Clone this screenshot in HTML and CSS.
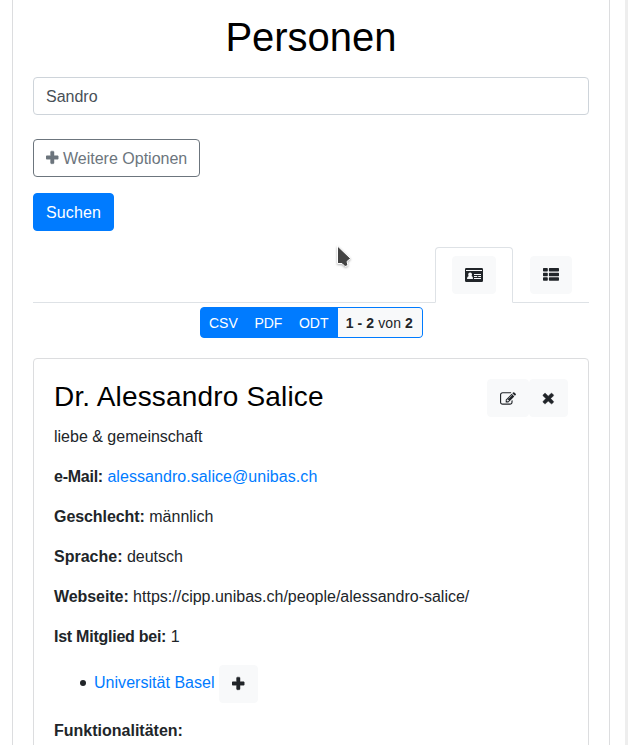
FILE: index.html
```html
<!DOCTYPE html>
<html lang="de">
<head>
<meta charset="utf-8">
<title>Personen</title>
<link rel="stylesheet" href="styles.css">
</head>
<body>
<svg class="defs" aria-hidden="true">
  <symbol id="plus" viewBox="192 0 1408 1792"><path d="M1600 736v192q0 40-28 68t-68 28h-416v416q0 40-28 68t-68 28h-192q-40 0-68-28t-28-68v-416h-416q-40 0-68-28t-28-68v-192q0-40 28-68t68-28h416v-416q0-40 28-68t68-28h192q40 0 68 28t28 68v416h416q40 0 68 28t28 68z"/></symbol>
</svg>
<main class="panel">
  <h1>Personen</h1>
  <form class="search">
    <input class="field" type="text" value="Sandro">
    <button class="btn btn-outline" type="button"><svg class="icon narrow"><use href="#plus"/></svg> Weitere Optionen</button>
    <button class="btn btn-primary" type="button">Suchen</button>
  </form>
  <nav class="tabs">
    <div class="tab active"><button class="btn btn-light"><svg class="icon card-icon" viewBox="0 0 18 16"><path fill-rule="evenodd" d="M1.300 1h15.400q1.300 0 1.300 1.300v11.400q0 1.300-1.300 1.300H1.300Q0 15 0 13.700V2.300Q0 1 1.300 1zM1 3v1h16V3zM2 12h6q0-3-1.500-3.100.5-.7.500-1.500 0-1.900-1.900-1.900T3.200 7.400q0 .8.500 1.500Q2 9.100 2 12zM9 7v1h7V7zM9 9v1h3.300V9zM13.200 9v1H16V9zM9 11v1h7v-1z"/></svg></button></div>
    <div class="tab"><button class="btn btn-light"><svg class="icon" viewBox="0 0 16 16"><path d="M.7 1h3.400q.7 0 .7.700v2.100q0 .7-.7.700H.7Q0 4.500 0 3.800V1.700Q0 1 .7 1zm5.900 0h8.700q.7 0 .7.700v2.100q0 .7-.7.700H6.600q-.7 0-.7-.7V1.700q0-.7.700-.7zM.7 5.700h3.400q.7 0 .7.700v2.100q0 .7-.7.700H.7Q0 9.200 0 8.500V6.400q0-.7.700-.7zm5.900 0h8.700q.7 0 .7.700v2.100q0 .7-.7.700H6.600q-.7 0-.7-.7V6.400q0-.7.700-.7zM.7 10.300h3.400q.7 0 .7.700v2.100q0 .7-.7.700H.7q-.7 0-.7-.7V11q0-.7.700-.7zm5.900 0h8.700q.7 0 .7.700v2.100q0 .7-.7.700H6.600q-.7 0-.7-.7V11q0-.7.700-.7z"/></svg></button></div>
  </nav>
  <div class="exports">
    <a>CSV</a><a>PDF</a><a>ODT</a><span class="count"><b>1 - 2</b> von <b>2</b></span>
  </div>
  <article class="card">
    <header>
      <h3>Dr. Alessandro Salice</h3>
      <div class="actions">
        <button class="btn btn-light"><svg class="icon edit" viewBox="0 0 1792 1792"><path d="M888 1184l116-116-152-152-116 116v56h96v96h56zm440-720q-16-16-33 1l-350 350q-17 17-1 33t33-1l350-350q17-17 1-33zm80 594v190q0 119-84.500 203.500t-203.500 84.500h-832q-119 0-203.500-84.500t-84.500-203.500v-832q0-119 84.500-203.500t203.500-84.500h832q63 0 117 25 15 7 18 23 3 17-9 29l-49 49q-14 14-32 8-23-6-45-6h-832q-66 0-113 47t-47 113v832q0 66 47 113t113 47h832q66 0 113-47t47-113v-126q0-13 9-22l64-64q15-15 35-7t20 29zm-96-738l288 288-672 672h-288v-288zm444 132l-92 92-288-288 92-92q28-28 68-28t68 28l152 152q28 28 28 68t-28 68z"/></svg></button><button class="btn btn-light"><svg class="icon narrow" viewBox="192 0 1408 1792"><path d="M1490 1322q0 40-28 68l-136 136q-28 28-68 28t-68-28l-294-294-294 294q-28 28-68 28t-68-28l-136-136q-28-28-28-68t28-68l294-294-294-294q-28-28-28-68t28-68l136-136q28-28 68-28t68 28l294 294 294-294q28-28 68-28t68 28l136 136q28 28 28 68t-28 68l-294 294 294 294q28 28 28 68z"/></svg></button>
      </div>
    </header>
    <p>liebe &amp; gemeinschaft</p>
    <p><b class="tight">e-Mail:</b> <a class="mail">alessandro.salice@unibas.ch</a></p>
    <p><b>Geschlecht:</b> männlich</p>
    <p><b class="normal">Sprache:</b> deutsch</p>
    <p><b>Webseite:</b> https://cipp.unibas.ch/people/alessandro-salice/</p>
    <p><b class="tight">Ist Mitglied bei:</b> 1</p>
    <ul><li><a class="org">Universität Basel</a> <button class="btn btn-light"><svg class="icon narrow"><use href="#plus"/></svg></button></li></ul>
    <p><b class="normal">Funktionalitäten:</b></p>
  </article>
</main>
<svg class="cursor" viewBox="0 0 18 24"><path d="M2.500 1v17.500H7l3 3 3-1-1-4 3.500-3z"/></svg>
</body>
</html>
```
FILE: styles.css
```css
* { box-sizing: border-box; }
html { height: 100%; overflow: hidden; }
body {
  height: 745px;
  margin: 0;
  padding: 0 15px 0 12px;
  overflow: hidden;
  border-right: 3px solid #eee;
  background: #fff;
  color: #212529;
  font: 16px/24px "Liberation Sans", Arial, sans-serif;
}
.defs { display: none; }
.panel {
  width: 598px;
  height: 745px;
  padding: 13px 20px 0;
  overflow: hidden;
  border: solid #dcdddf;
  border-width: 0 1px;
}
h1, h3 { margin: 0; color: #000; font-weight: 500; line-height: 1.2; }
h1 { margin-bottom: 16px; font-size: 40px; text-align: center; }
h3 { padding-top: 1px; font-size: 28px; letter-spacing: .17px; }
a { color: #007bff; }
b { font-weight: 700; }
p b { letter-spacing: -.07px; }
p .tight { letter-spacing: -.25px; }
p .normal { letter-spacing: 0; }
.mail { letter-spacing: .06px; }
.org { letter-spacing: .03px; }
.search { display: flex; flex-direction: column; align-items: flex-start; gap: 16px; }
.field {
  width: 100%;
  height: 38px;
  margin-bottom: 8px;
  padding: 7px 12px 5px;
  border: 1px solid #ced4da;
  border-radius: 4px;
  color: #495057;
  font: inherit;
}
.btn {
  height: 38px;
  padding: 7px 12px 5px;
  border: 1px solid transparent;
  border-radius: 4px;
  font: inherit;
  color: #212529;
  white-space: nowrap;
  vertical-align: middle;
}
.btn-outline { border-color: #6c757d; background: #fff; color: #6c757d; }
.btn-primary { border-color: #007bff; background: #007bff; color: #fff; letter-spacing: .14px; }
.btn-light { border-color: #f8f9fa; background: #f8f9fa; }
.icon { display: inline-block; width: 16px; height: 16px; fill: currentColor; vertical-align: -2px; }
.icon.edit { vertical-align: -2.5px; }
.icon.narrow { width: 12.57px; overflow: visible; stroke: currentColor; stroke-width: 50; }
.icon.card-icon { width: 18px; }
.tabs {
  display: flex;
  justify-content: flex-end;
  height: 56px;
  margin-top: 16px;
  border-bottom: 1px solid #dee2e6;
}
.tab { height: 56px; padding: 8px 16px; border: 1px solid transparent; border-radius: 4px 4px 0 0; }
.tab.active { border-color: #dee2e6 #dee2e6 #fff; background: #fff; }
.exports {
  display: flex;
  width: 223px;
  height: 31px;
  margin: 4px auto 20px;
  overflow: hidden;
  border: 1px solid #007bff;
  border-radius: 4px;
  background: #007bff;
  font-size: 14px;
  line-height: 21px;
}
.exports > * { flex: none; padding: 5px 8px 3px; color: #fff; }
.exports a:first-child { padding-left: 8.5px; }
.exports a + a { margin-left: .6px; }
.exports .count { flex: 1; margin-left: 1.1px; background: #f8f9fa; color: #212529; letter-spacing: .1px; white-space: nowrap; }
.card { height: 500px; padding: 20px; border: 1px solid #dcdddf; border-radius: 4px; }
header { display: flex; justify-content: space-between; height: 46px; }
.actions { display: flex; }
p { margin: 0 0 16px; }
ul { margin: 0 0 16px; padding-left: 40px; list-style: none; }
li { position: relative; }
li::before {
  content: "";
  position: absolute;
  left: -14px;
  top: 15px;
  width: 6px;
  height: 6px;
  border-radius: 50%;
  background: #212529;
}
.cursor {
  position: absolute;
  left: 334.5px;
  top: 245px;
  width: 18px;
  height: 24px;
  fill: #444;
  stroke: #fff;
  stroke-width: 1;
  filter: drop-shadow(0 1px 1px rgba(0, 0, 0, .3));
}
```
